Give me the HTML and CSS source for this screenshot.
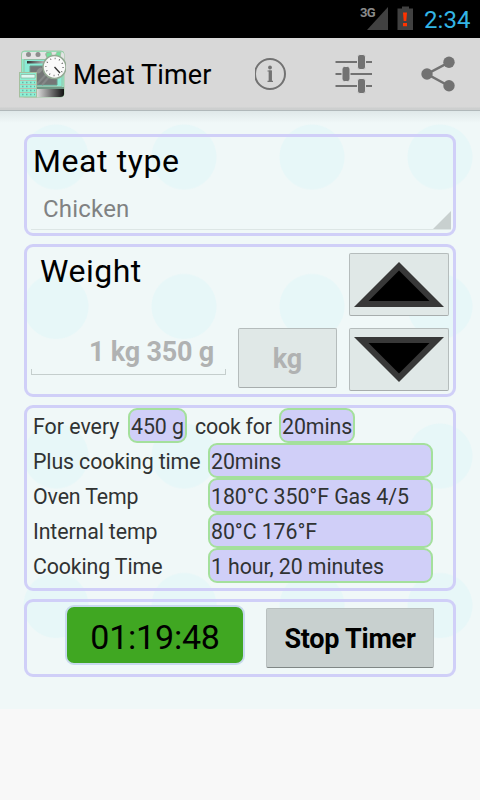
FILE: index.html
```html
<!DOCTYPE html>
<html lang="en">
<head>
<meta charset="utf-8">
<title>Meat Timer</title>
<link rel="stylesheet" href="styles.css">
</head>
<body>
<div class="status">
  <svg class="status-icons" width="54" height="38" viewBox="0 0 54 38">
    <path d="M28 7v23H7z" fill="#414141"/>
    <path d="M42 8.500V6.500h7v2h4V30H37.500V8.500z" fill="#414141"/>
    <path d="M43 12.500h4l-.7 8.500h-2.600zM43 23h4v3.300h-4z" fill="#ff3300"/>
  </svg>
  <span class="net">3G</span>
  <span class="clock">2:34</span>
</div>
<header class="bar">
  <svg class="logo" width="48" height="48" viewBox="0 0 48 48">
    <defs>
      <linearGradient id="drawer"><stop offset="0" stop-color="#aaa"/><stop offset=".3" stop-color="#eee"/><stop offset="1" stop-color="#111"/></linearGradient>
      <linearGradient id="slot"><stop offset="0" stop-color="#333"/><stop offset="1" stop-color="#ddd"/></linearGradient>
    </defs>
    <rect x="3.500" y="1" width="42.500" height="46" rx="3" fill="#8feccb" stroke="#9dc9a4"/>
    <path d="M6 2h37q3 0 3 3v4H4V5q0-3 2-3z" fill="#e4e4e4"/>
    <g fill="#8d8d8d"><circle cx="10.500" cy="4.500" r="2.500"/><circle cx="20" cy="4.500" r="2.500"/><circle cx="30" cy="4.500" r="2.500"/></g>
    <path d="M6 9.500h38v27H6z" fill="#8aecd5" stroke="#98b89f" stroke-width=".8"/>
    <path d="M9 11h22v2.500H9z" fill="url(#slot)"/>
    <path d="M12 16h27v19H12z" fill="#747777" stroke="#6f9487"/>
    <path d="M18 35l18-19M24 35l14-16" stroke="#858989" stroke-width="2"/>
    <ellipse cx="21.500" cy="20.500" rx="3.500" ry="2" transform="rotate(-45 21.500 20.500)" fill="#8d918f"/>
    <path d="M4 39h42v5q0 3-4 3H4z" fill="url(#drawer)"/>
    <path d="M4 38h42" stroke="#657c6e" stroke-width="1.500"/>
    <rect x="1.500" y="22.500" width="17" height="24.500" fill="#8cf0d4" stroke="#a5bf9f"/>
    <path d="M3 24.500h14v3.500H3z" fill="#ddfaf3" stroke="#8aad99" stroke-width=".7"/>
    <path d="M2 30.500h16M2 34.500h16M2 38.500h16M2 42.500h16" stroke="#b6c0ae"/>
    <path d="M4 32.500h13M4 36.500h13M4 40.500h13M4 44.500h13" stroke="#6ab0a8" stroke-width="1.500" stroke-dasharray="1.500 2.500"/>
    <path d="M28 3l5-1 1 3-5 4zM43 2l-4 0-2 4 5 2z" fill="#73df9d" stroke="#a1b99d" stroke-width=".7"/>
    <circle cx="36.500" cy="17" r="11.500" fill="#fafafa" stroke="#93a893" stroke-width="1.500"/>
    <circle cx="36.500" cy="17" r="8.600" fill="none" stroke="#555" stroke-width="1.500" stroke-dasharray=".8 3.700"/>
    <path d="M36.500 17l5.500 6" stroke="#333" stroke-width="1.300"/>
  </svg>
  <h1 class="title">Meat Timer</h1>
  <svg class="actions" width="210" height="48" viewBox="0 0 210 48">
    <g fill="none" stroke="#727272">
      <circle cx="15" cy="24" r="15" stroke-width="2"/>
      <path d="M12.500 21h4M12.500 31.300h5.500" stroke-width="1.200"/>
      <path d="M15.300 20.500v11.500" stroke-width="3.300"/>
      <path d="M80.500 12H117M80.500 24H117M80.500 36H117" stroke-width="2"/>
    </g>
    <circle cx="15" cy="17.500" r="1.900" fill="#727272"/>
    <g fill="#727272" stroke="#d8d8d8">
      <rect x="102.500" y="4.500" width="8" height="15" rx="2.500"/>
      <rect x="87" y="16.500" width="8" height="15" rx="2.500"/>
      <rect x="102.500" y="28.500" width="8" height="15" rx="2.500"/>
    </g>
    <path d="M194 12.300L172 24l22 12" fill="none" stroke="#727272" stroke-width="2.500"/>
    <g fill="#727272"><circle cx="194" cy="12.300" r="5.700"/><circle cx="172" cy="24" r="5.700"/><circle cx="194" cy="35.700" r="5.700"/></g>
  </svg>
</header>
<main class="content">
  <section class="panel type">
    <h2>Meat type</h2>
    <div class="spinner"><span>Chicken</span>
      <svg width="18" height="18" viewBox="0 0 18 18"><path d="M18 0v18H0z" fill="#c8d0cf"/></svg>
    </div>
  </section>
  <section class="panel weight">
    <div class="amount">
      <h2>Weight</h2>
      <div class="field">1 kg 350 g</div>
    </div>
    <div class="btn unit">kg</div>
    <div class="steps">
      <div class="btn step"><svg width="90" height="45" viewBox="0 0 90 45"><path d="M45 0l45 45H0z" fill="#383838"/><path d="M45 8.500L75.500 39h-61z"/></svg></div>
      <div class="btn step"><svg width="90" height="45" viewBox="0 0 90 45"><path d="M45 45L90 0H0z" fill="#383838"/><path d="M45 36.500L75.500 6h-61z"/></svg></div>
    </div>
  </section>
  <section class="panel info">
    <div class="row first"><span class="every">For every</span><b class="pill p1">450 g</b><span class="cook">cook for</span><b class="pill p2">20mins</b></div>
    <div class="row"><span class="label">Plus cooking time</span><b class="pill">20mins</b></div>
    <div class="row"><span class="label">Oven Temp</span><b class="pill">180°C 350°F Gas 4/5</b></div>
    <div class="row"><span class="label">Internal temp</span><b class="pill">80°C 176°F</b></div>
    <div class="row"><span class="label">Cooking Time</span><b class="pill">1 hour, 20 minutes</b></div>
  </section>
  <section class="panel timer">
    <div class="count">01:19:48</div>
    <div class="btn stop">Stop Timer</div>
  </section>
</main>
</body>
</html>
```
FILE: styles.css
```css
* { box-sizing: border-box; }
body { margin: 0; height: 800px; background: #f8f8f8; font-family: Roboto, "Noto Sans", sans-serif; color: #000; white-space: nowrap; overflow: hidden; }
h1, h2 { margin: 0; font-weight: 400; }
svg { display: block; flex: none; }
.status { height: 38px; background: #000; display: flex; justify-content: flex-end; padding-right: 9px; position: relative; }
.status-icons { margin-right: 10px; }
.net { position: absolute; left: 360px; top: 5px; font-size: 13px; line-height: 15px; font-weight: 700; letter-spacing: -.8px; color: #8a8a8a; }
.clock { width: 47px; font-size: 24px; line-height: 40px; color: #33b5e5; letter-spacing: .1px; }
.bar { height: 73px; background: linear-gradient(#d8d8d8 0 69px, #cdcfcf 70px 72px, #b0b8ba 72px); display: flex; align-items: flex-start; padding: 12px 0 0 18px; }
.title { width: 181px; padding-left: 7px; font-size: 27px; line-height: 50px; letter-spacing: .1px; }
.actions { margin-left: 8px; }
.content {
  height: 598px; padding: 23px 24px 0; display: flex; flex-direction: column; gap: 8px;
  background:
    linear-gradient(#dfe8e9, #f0f8f800 12px),
    radial-gradient(circle 33px at 64px 75px, #e7f7f8 32px, #e7f7f800 33px) -8px -29px / 128px 149.500px,
    #f0f8f8;
}
.panel { border: 3px solid #d0cff8; border-radius: 9px; }
h2 { font-size: 32px; }
.type { height: 102px; padding: 0 2px 0 4px; }
.type h2 { line-height: 48px; padding-left: 2px; letter-spacing: .6px; }
.spinner { height: 45px; border-bottom: 1px solid #dde6e5; display: flex; justify-content: space-between; align-items: flex-end; font-size: 24px; color: #808282; }
.spinner span { line-height: 39px; padding-left: 12px; letter-spacing: .2px; }
.weight { height: 153px; display: flex; padding-left: 4px; }
.amount { width: 195px; display: flex; flex-direction: column; }
.amount h2 { line-height: 48px; padding-left: 9px; letter-spacing: .5px; }
.field { height: 47px; margin-top: 33px; padding-right: 12px; text-align: right; font-size: 27px; font-weight: 700; line-height: 49px; letter-spacing: -.2px; color: #b0b2b2; border-bottom: 1px solid #c5cecd; background: linear-gradient(#c5cecd, #c5cecd) left bottom / 1px 5px no-repeat, linear-gradient(#c5cecd, #c5cecd) right bottom / 1px 5px no-repeat; }
.btn { border: 1px solid #b5bcbc; border-bottom-color: #a7adad; border-radius: 2px; background: #e0e8e7; display: flex; justify-content: center; align-items: center; }
.unit { width: 99px; height: 60px; margin: 81px 12px 0 12px; padding-top: 2px; font-size: 27px; font-weight: 700; color: #b0b2b2; }
.steps { display: grid; gap: 12px; align-content: start; padding-top: 6px; }
.step { width: 100px; height: 63px; padding-bottom: 1px; }
.info { height: 186px; padding-left: 6px; font-size: 21.330px; line-height: 35px; color: #303333; }
.row { display: flex; height: 35px; }
.label { width: 175px; letter-spacing: -.12px; }
.every { width: 95px; }
.cook { width: 84px; letter-spacing: -.2px; }
.label, .every, .cook { padding-top: 1px; line-height: 36px; }
.pill { width: 225px; height: 35px; border: 2px solid #a4e09c; border-radius: 9px; background: #d0cff8; padding-left: 1px; font-weight: 400; line-height: 33px; letter-spacing: -.08px; }
.p1 { width: 59px; margin-right: 8px; }
.p2 { width: 76px; }
.timer { height: 78px; display: flex; padding: 3px 0 0 38px; }
.count { width: 180px; height: 60px; border: 2px solid #c8d9ee; border-radius: 9px; background: #40a722; text-align: center; font-size: 34px; line-height: 60px; letter-spacing: -.2px; }
.stop { width: 168px; height: 60px; margin: 3px 0 0 21px; padding-top: 1px; background: #c8d0cf; border-color: #b9c0c0; border-bottom-color: #808786; font-size: 27px; font-weight: 700; letter-spacing: -.25px; }
```
